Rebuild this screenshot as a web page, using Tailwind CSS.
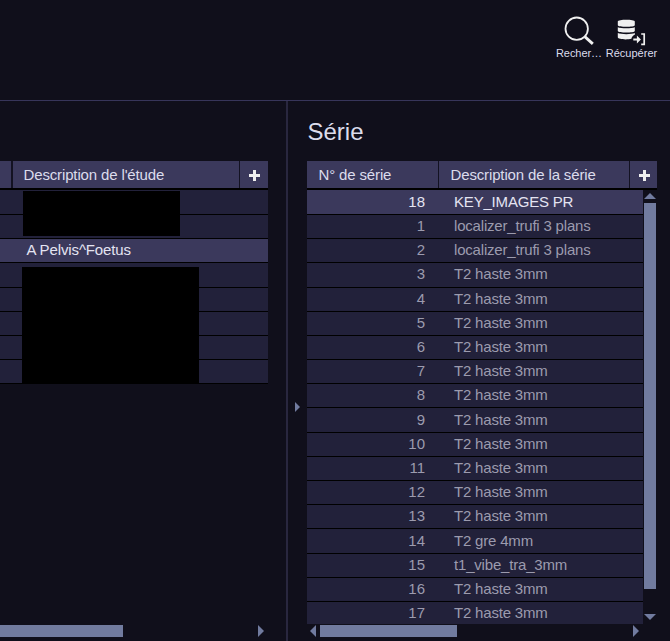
<!DOCTYPE html>
<html lang="fr">
<head>
<meta charset="utf-8">
<title>Série</title>
<script src="https://cdn.jsdelivr.net/npm/@tailwindcss/browser@4"></script>
</head>
<body class="h-[641px] w-[670px] overflow-hidden bg-[#100f1b] font-['Liberation_Sans',Arial,sans-serif] text-[15px] text-[#dcdcec]">
<div class="flex h-full flex-col">
  <header class="flex h-[101px] shrink-0 justify-end border-b border-[#37355a] pr-[12px] pt-[14px] text-[11px] leading-[13px]">
    <button class="flex w-[48px] flex-col items-center">
      <svg class="mb-px h-[32px] w-[32px] shrink-0" viewBox="0 0 32 32" fill="none" stroke="#f0f0f0"><circle cx="13.700" cy="14.700" r="11.200" stroke-width="1.800"/><path d="M21.800 22.600l8 7.300" stroke-width="2.800"/></svg>
      <span class="whitespace-nowrap tracking-[-0.05px]">Recher…</span>
    </button>
    <button class="ml-[2px] flex w-[53px] flex-col items-center">
      <svg class="mb-px h-[32px] w-[32px] shrink-0" viewBox="0 0 32 32" fill="#f0f0f0"><path d="M1.800 7.500C1.800 5.300 18.800 5.300 18.800 7.500V11.200C18.800 13.200 1.800 13.200 1.800 11.200zM1.800 13.200c3 1.500 14 1.500 17 0v3.700c0 2-17 2-17 0zM1.800 19c3 1.500 14 1.500 17 0v1.800c-1.600 .5-3 2-3.400 4C11 26 1.800 25.500 1.800 23.300z"/><path d="M17.300 24.500h3.600v-2.900l4 3.900-4 3.900v-2.900h-3.600z"/><path d="M25.200 20h3v10.300h-3" fill="none" stroke="#f0f0f0" stroke-width="1.700"/></svg>
      <span>Récupérer</span>
    </button>
  </header>

  <main class="flex min-h-0 flex-1">
    <section class="flex w-[288px] shrink-0 flex-col border-r-2 border-[#29273f] pt-[60px]">
      <div class="w-[268px]">
        <div class="flex h-[27px] bg-[#131222] leading-[27px]">
          <div class="mr-[2px] w-[11px] bg-[#3b395c]"></div>
          <div class="mr-px w-[226px] bg-[#3b395c] pl-[10.5px] tracking-[-0.14px]">Description de l'étude</div>
          <div class="flex flex-1 items-center justify-center bg-[#3b395c] pl-px pt-px"><svg class="h-[11px] w-[11px]" viewBox="0 0 11 11" fill="#f0f0f0"><path d="M4 0h3v4h4v3H7v4H4V7H0V4h4z"/></svg></div>
        </div>
        <div class="relative border-t-2 border-black bg-[#22213a] pt-[0.8px]">
          <div id="studies"></div>
          <div class="absolute left-[23px] top-[1px] h-[45px] w-[157px] bg-black"></div>
          <div class="absolute left-[22px] top-[77px] h-[116px] w-[177px] bg-black"></div>
        </div>
      </div>
      <div class="mb-[4px] mt-auto flex h-[12px] w-[264px] justify-between">
        <div class="w-[123px] bg-[#717b9f]"></div>
        <svg class="h-[12px] w-[6px]" viewBox="0 0 6 12" fill="#717b9f"><path d="M0 0l6 6-6 6z"/></svg>
      </div>
    </section>

    <div class="flex w-[19px] shrink-0 pl-[7px] pt-[301px]"><svg class="h-[10px] w-[5px]" viewBox="0 0 5 10" fill="#717b9f"><path d="M0 0l5 5-5 5z"/></svg></div>

    <section class="flex w-[350px] shrink-0 flex-col">
      <h1 class="h-[60px] pl-[0.5px] pt-[17px] text-[24px] leading-[28px]">Série</h1>
      <div class="flex h-[27px] shrink-0 bg-[#131222] leading-[27px] tracking-[-0.14px]">
        <div class="mr-px w-[131px] bg-[#3b395c] pl-[11.5px]">N° de série</div>
        <div class="mr-px w-[190px] bg-[#3b395c] pl-[11.5px]">Description de la série</div>
        <div class="flex flex-1 items-center justify-center bg-[#3b395c] pl-px pt-px"><svg class="h-[11px] w-[11px]" viewBox="0 0 11 11" fill="#f0f0f0"><path d="M4 0h3v4h4v3H7v4H4V7H0V4h4z"/></svg></div>
      </div>
      <div class="flex h-[436px] shrink-0 border-t-2 border-black">
        <div id="series" class="w-[336px] overflow-hidden bg-[#3b395c] pt-[0.8px]"></div>
        <div class="ml-px flex w-[12px] flex-col justify-between pb-[4px] pt-[3px]">
          <svg class="h-[6px] w-[12px]" viewBox="0 0 12 6" fill="#717b9f"><path d="M0 6l6-6 6 6z"/></svg>
          <div class="mb-[25px] mt-[4px] flex-1 bg-[#717b9f]"></div>
          <svg class="h-[6px] w-[12px]" viewBox="0 0 12 6" fill="#717b9f"><path d="M0 0l6 6 6-6z"/></svg>
        </div>
      </div>
      <div class="mt-px flex h-[12px] w-[332px] pl-[3px]">
        <svg class="h-[12px] w-[6px]" viewBox="0 0 6 12" fill="#717b9f"><path d="M6 0L0 6l6 6z"/></svg>
        <div class="ml-[4px] w-[137px] bg-[#717b9f]"></div>
        <svg class="ml-auto h-[12px] w-[6px]" viewBox="0 0 6 12" fill="#717b9f"><path d="M0 0l6 6-6 6z"/></svg>
      </div>
    </section>
  </main>
</div>
<script>
const normal = 'flex h-[24.2px] border-b border-black bg-[#22213a] leading-[22px] text-[#9c9bae]';
const selected = 'flex h-[24.2px] border-b border-black bg-[#3b395c] leading-[22px] text-[#e4e4f2]';
document.getElementById('studies').innerHTML = ['', '', 'A Pelvis^Foetus', '', '', '', '', '']
  .map(t => `<div class="${t ? selected : normal}"><span class="pl-[26.5px] tracking-[-0.12px]">${t}</span></div>`).join('');
const series = [[18, 'KEY_IMAGES PR'], [1, 'localizer_trufi 3 plans'], [2, 'localizer_trufi 3 plans']];
for (let n = 3; n <= 17; n++) series.push([n, n === 14 ? 'T2 gre 4mm' : n === 15 ? 't1_vibe_tra_3mm' : 'T2 haste 3mm']);
document.getElementById('series').innerHTML = series
  .map(([n, t]) => `<div class="${n === 18 ? selected : normal}"><span class="w-[118px] pt-[0.1px] text-right">${n}</span><span class="pl-[29px] pt-[0.1px] tracking-[-0.19px]">${t}</span></div>`).join('');
</script>
</body>
</html>
